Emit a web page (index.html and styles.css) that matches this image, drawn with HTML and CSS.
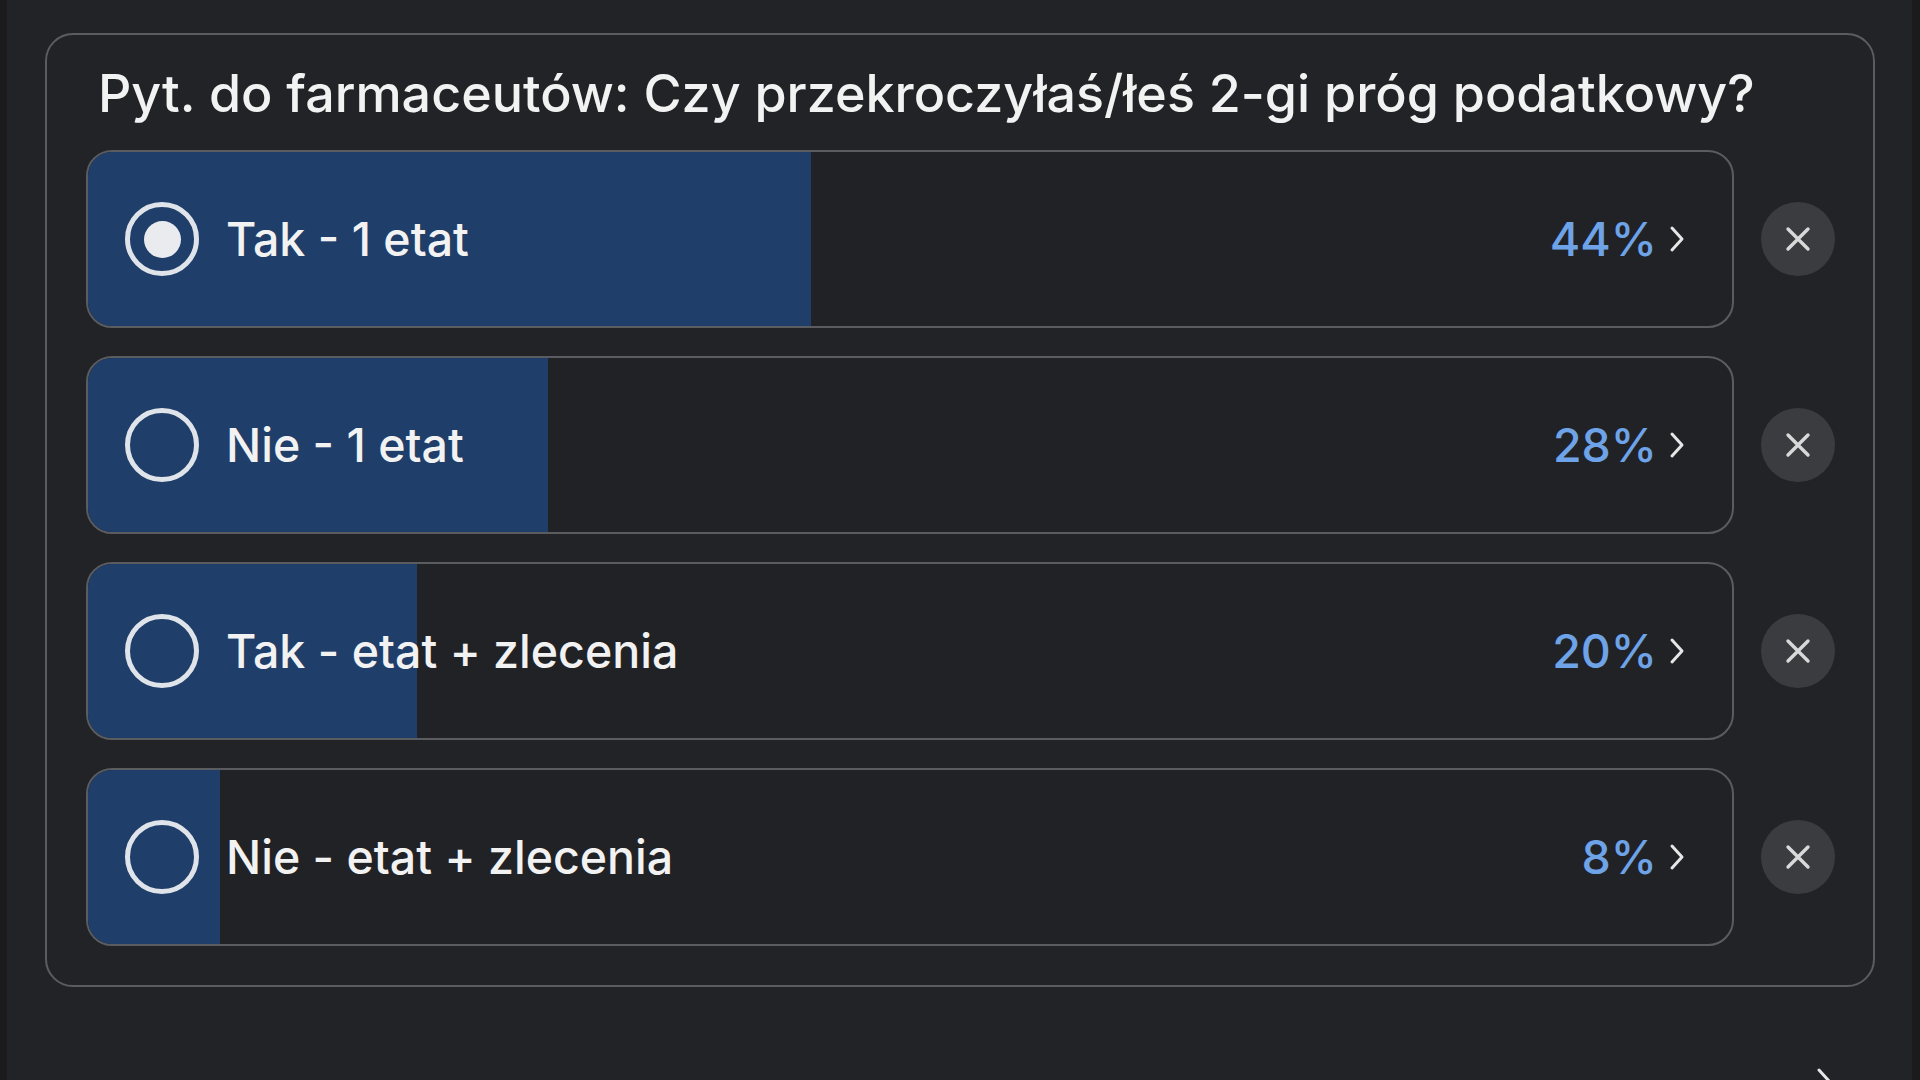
FILE: index.html
```html
<!DOCTYPE html>
<html lang="pl">
<head>
<meta charset="utf-8">
<title>Ankieta</title>
<link rel="stylesheet" href="styles.css">
</head>
<body>
<div class="page">
  <section class="poll">
    <h1 class="title">Pyt. do farmaceutów: Czy przekroczyłaś/łeś 2-gi próg podatkowy?</h1>
    <div class="options">
      <div class="row">
        <div class="option">
          <div class="fill" style="width:44%"></div>
          <span class="radio checked"></span>
          <span class="label">Tak - 1 etat</span>
          <span class="pct">44%</span>
          <svg class="chev" viewBox="0 0 16 28" width="16" height="28"><path d="M3 3 L13 14 L3 25" fill="none" stroke="#e6e6e6" stroke-width="3" stroke-linecap="round" stroke-linejoin="round"/></svg>
        </div>
        <button class="remove" type="button"><svg viewBox="0 0 28 28" width="28" height="28"><path d="M4 4 L24 24 M24 4 L4 24" stroke="#d9d9d9" stroke-width="3.4" stroke-linecap="round"/></svg></button>
      </div>
      <div class="row">
        <div class="option">
          <div class="fill" style="width:28%"></div>
          <span class="radio"></span>
          <span class="label">Nie - 1 etat</span>
          <span class="pct">28%</span>
          <svg class="chev" viewBox="0 0 16 28" width="16" height="28"><path d="M3 3 L13 14 L3 25" fill="none" stroke="#e6e6e6" stroke-width="3" stroke-linecap="round" stroke-linejoin="round"/></svg>
        </div>
        <button class="remove" type="button"><svg viewBox="0 0 28 28" width="28" height="28"><path d="M4 4 L24 24 M24 4 L4 24" stroke="#d9d9d9" stroke-width="3.4" stroke-linecap="round"/></svg></button>
      </div>
      <div class="row">
        <div class="option">
          <div class="fill" style="width:20%"></div>
          <span class="radio"></span>
          <span class="label">Tak - etat + zlecenia</span>
          <span class="pct">20%</span>
          <svg class="chev" viewBox="0 0 16 28" width="16" height="28"><path d="M3 3 L13 14 L3 25" fill="none" stroke="#e6e6e6" stroke-width="3" stroke-linecap="round" stroke-linejoin="round"/></svg>
        </div>
        <button class="remove" type="button"><svg viewBox="0 0 28 28" width="28" height="28"><path d="M4 4 L24 24 M24 4 L4 24" stroke="#d9d9d9" stroke-width="3.4" stroke-linecap="round"/></svg></button>
      </div>
      <div class="row">
        <div class="option">
          <div class="fill" style="width:8%"></div>
          <span class="radio"></span>
          <span class="label">Nie - etat + zlecenia</span>
          <span class="pct">8%</span>
          <svg class="chev" viewBox="0 0 16 28" width="16" height="28"><path d="M3 3 L13 14 L3 25" fill="none" stroke="#e6e6e6" stroke-width="3" stroke-linecap="round" stroke-linejoin="round"/></svg>
        </div>
        <button class="remove" type="button"><svg viewBox="0 0 28 28" width="28" height="28"><path d="M4 4 L24 24 M24 4 L4 24" stroke="#d9d9d9" stroke-width="3.4" stroke-linecap="round"/></svg></button>
      </div>
    </div>
  </section>
  <div class="footer">
    <svg class="more" viewBox="0 0 16 28" width="16" height="28"><path d="M3 3 L13 14 L3 25" fill="none" stroke="#e6e6e6" stroke-width="3" stroke-linecap="round" stroke-linejoin="round"/></svg>
  </div>
</div>
</body>
</html>
```

FILE: styles.css
```css
html, body {
  margin: 0;
  padding: 0;
  background: #1b1b1d;
}

.page {
  width: 1905px;
  height: 1080px;
  margin-left: 7px;
  box-sizing: border-box;
  background: #222326;
  padding: 33px 0 0 38px;
  overflow: hidden;
  font-family: Inter, "Noto Sans", sans-serif;
  color: #f2f2f3;
}

.poll {
  width: 1830px;
  height: 954px;
  box-sizing: border-box;
  border: 2px solid #5b5c60;
  border-radius: 28px;
  padding: 31px 38px 38px 39px;
  display: flex;
  flex-direction: column;
  gap: 28px;
}

.title {
  margin: 0 0 0 12px;
  font-size: 52px;
  line-height: 56px;
  font-weight: 500;
  letter-spacing: 0;
  white-space: nowrap;
}

.options {
  display: flex;
  flex-direction: column;
  gap: 28px;
}

.row {
  display: flex;
  align-items: center;
  gap: 27px;
}

.option {
  position: relative;
  width: 1648px;
  height: 178px;
  box-sizing: border-box;
  border: 2px solid #5b5c60;
  border-radius: 26px;
  background: #212225;
  overflow: hidden;
  display: flex;
  align-items: center;
  padding: 0 47px 0 37px;
}

.fill {
  position: absolute;
  left: 0;
  top: 0;
  bottom: 0;
  background: #1f3e69;
}

.radio {
  position: relative;
  width: 74px;
  height: 74px;
  box-sizing: border-box;
  border: 5px solid #dfe3ea;
  border-radius: 50%;
  flex: none;
  display: flex;
  align-items: center;
  justify-content: center;
}

.radio.checked::after {
  content: "";
  width: 37px;
  height: 37px;
  border-radius: 50%;
  background: #e9ebef;
}

.label {
  position: relative;
  margin-left: 27px;
  font-size: 46.5px;
  font-weight: 500;
  flex: 1;
  white-space: nowrap;
}

.pct {
  position: relative;
  font-size: 46.5px;
  font-weight: 500;
  color: #6ea3e8;
}

.chev {
  position: relative;
  margin-left: 12px;
  flex: none;
}

.remove {
  width: 74px;
  height: 74px;
  border: none;
  padding: 0;
  border-radius: 50%;
  background: #3b3c3f;
  display: flex;
  align-items: center;
  justify-content: center;
  flex: none;
}

.footer {
  display: flex;
  justify-content: flex-end;
  padding: 80px 80px 0 0;
}

.more {
  width: 16px;
  height: 28px;
}
```
